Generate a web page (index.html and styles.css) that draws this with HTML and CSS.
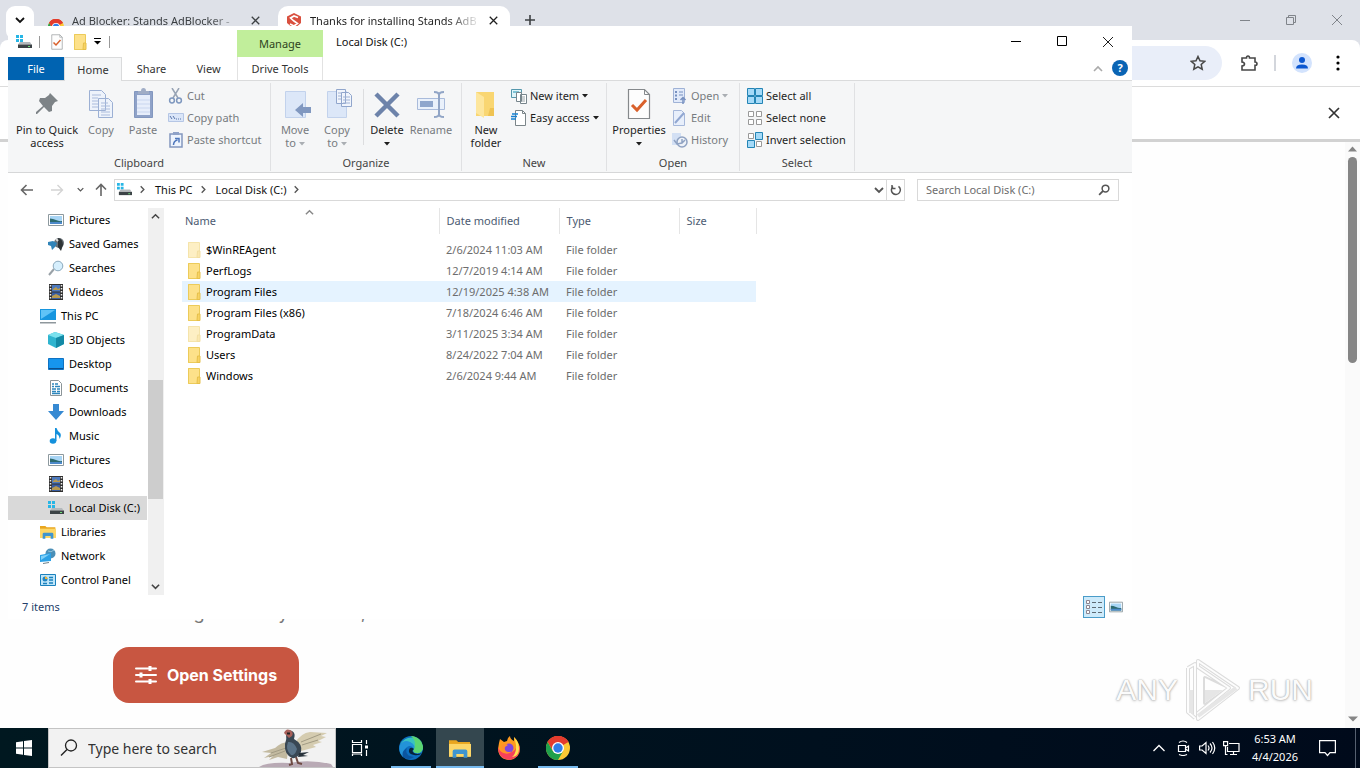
FILE: index.html
```html
<!DOCTYPE html>
<html lang="en">
<head>
<meta charset="utf-8">
<title>Local Disk (C:)</title>
<link rel="stylesheet" href="styles.css">
</head>
<body>
<svg class="defs" aria-hidden="true">
  <symbol id="close" viewBox="0 0 12 12"><path d="M1 1l10 10M11 1L1 11" fill="none" stroke="currentColor"/></symbol>
  <symbol id="caret" viewBox="0 0 6 4"><path d="M0 0h6L3 3.500z" fill="currentColor"/></symbol>
  <symbol id="chev-down" viewBox="0 0 10 10"><path d="M1 3l4 4 4-4" fill="none" stroke="currentColor" stroke-width="1.800"/></symbol>
  <symbol id="chev-up" viewBox="0 0 10 10"><path d="M1 7l4-4 4 4" fill="none" stroke="currentColor" stroke-width="1.600"/></symbol>
  <symbol id="chev-right" viewBox="0 0 10 10"><path d="M3 1.500L6.500 5 3 8.500" fill="none" stroke="currentColor" stroke-width="1.500"/></symbol>
  <symbol id="drive" viewBox="0 0 16 16"><path d="M0 1h3v3H0zM4 1h3v3H4zM0 5h3v3H0zM4 5h3v3H4z" fill="#27b6e6"/><path d="M4 8h10l1.500 2.500H2z" fill="#b4b9bc"/><path d="M2 10.500h14V14H2z" fill="#3c4346"/><path d="M12 12.500h2" stroke="#6fe07a"/></symbol>
  <symbol id="folder" viewBox="0 0 14 16"><path d="M1 0h9.500v1H13v15H1z" fill="#fbdc75"/><path d="M1.500.5h11v15h-11z" fill="#fde18a" stroke="#eccb5a"/><path d="M10.500 9H13v6.500h-3z" fill="#f8d364" stroke="#e6bf4a"/></symbol>
  <symbol id="checkdoc" viewBox="0 0 26 32"><path d="M2.500 1.500h16l5 5v24h-21z" fill="#fdfdfd" stroke="#85898c" stroke-width="1.200"/><path d="M18.500 1.500v5h5" fill="none" stroke="#85898c"/><path d="M6 17l5 5 9-10" fill="none" stroke="#d9602b" stroke-width="3"/></symbol>
  <symbol id="picture" viewBox="0 0 16 16"><path d="M.5 2.500h15v11H.5z" fill="#fff" stroke="#8d999e"/><path d="M2 4h12v8H2z" fill="#a8d5f5"/><path d="M2 6.500q3 0 6 1.500t6 1v3H2z" fill="#2c6a6f"/><path d="M2 10h12v2H2z" fill="#4c89ca"/></symbol>
  <symbol id="film" viewBox="0 0 16 16"><path d="M1 0h14v16H1z" fill="#303030"/><path d="M4 1h8v6.500H4z" fill="#4c79be"/><path d="M4 8.500h8V15H4z" fill="#385da2"/><path d="M5 5l3-2 2 2 2-1v2H5zM4 12l4-2 4 2v2H4z" fill="#b79a50"/><path d="M2.500 1v15M13.500 1v15" stroke="#eee" stroke-width="1.500" stroke-dasharray="1.500 1.500"/></symbol>
  <symbol id="searchdoc" viewBox="0 0 16 16"><path d="M1 15l5-6" stroke="#9aa2a8" stroke-width="2"/><circle cx="10" cy="6" r="4.800" fill="#d6effd" stroke="#8ba9bd"/></symbol>
  <symbol id="glass" viewBox="0 0 16 16"><circle cx="10" cy="6" r="4.500" fill="none" stroke="currentColor" stroke-width="2"/><path d="M6.800 9.200L1.500 14.500" stroke="currentColor" stroke-width="2.400"/></symbol>
  <symbol id="libfolder" viewBox="0 0 24 20"><path d="M0 1h8l2 2h13v16H0z" fill="#e9a61f"/><path d="M0 5h24v14H0z" fill="#fdd768"/><path d="M4 20v-7q0-2 2-2h12q2 0 2 2v7h-4v-4H8v4z" fill="#3f95cf"/></symbol>
  <symbol id="chrome" viewBox="0 0 24 24"><circle cx="12" cy="12" r="12" fill="#fcc934"/><path d="M12 12L1.600 6A12 12 0 0 1 22.400 6z" fill="#e33b2e"/><path d="M12 6h10.400A12 12 0 0 0 1.600 6L7 15z" fill="#e33b2e"/><path d="M1.600 6A12 12 0 0 0 12 24l5.200-9-5.200 3-5.200-3z" fill="#1fa04c"/><circle cx="12" cy="12" r="6" fill="#fff"/><circle cx="12" cy="12" r="4.700" fill="#2f7de9"/></symbol>
</svg>

<div class="desktop">
  <main class="workspace">
    <section class="browser" aria-label="Browser">
      <header class="tabstrip">
        <button class="tab-search" aria-label="Search tabs"><svg width="10" height="10"><use href="#chev-down"/></svg></button>
        <div class="tab">
          <svg class="favicon" width="16" height="16"><use href="#chrome"/></svg>
          <span class="tab-title">Ad Blocker: Stands AdBlocker -</span>
          <button aria-label="Close tab"><svg class="bold" width="9" height="9"><use href="#close"/></svg></button>
        </div>
        <div class="tab active">
          <svg width="16" height="16" viewBox="0 0 16 16"><path d="M8 0l7 3.500V10l-7 6-7-6V3.500z" fill="#d9503f"/><path d="M12 4.500L8 3 4.500 5 8 8l3.500 2.500L8 13l-4-2" fill="none" stroke="#fff" stroke-width="1.600"/></svg>
          <span class="tab-title">Thanks for installing Stands AdB</span>
          <button aria-label="Close tab"><svg class="bold" width="9" height="9"><use href="#close"/></svg></button>
        </div>
        <button class="new-tab" aria-label="New tab"><svg width="12" height="12" viewBox="0 0 12 12"><path d="M6 1v10M1 6h10" stroke="currentColor" stroke-width="1.600"/></svg></button>
        <div class="win-controls muted">
          <button aria-label="Minimize browser"><svg width="12" height="12" viewBox="0 0 12 12"><path d="M1 6.500h10" stroke="currentColor"/></svg></button>
          <button aria-label="Restore browser"><svg width="12" height="12" viewBox="0 0 12 12"><path d="M1.500 3.500h7v7h-7zM3.500 3.500v-2h7v7h-2" fill="none" stroke="currentColor"/></svg></button>
          <button aria-label="Close browser"><svg width="12" height="12"><use href="#close"/></svg></button>
        </div>
      </header>
      <div class="toolbar">
        <div class="omnibox"><svg width="16" height="16" viewBox="0 0 16 16"><path d="M8 1.500l2 4.300 4.700.5-3.500 3.200 1 4.700L8 11.800l-4.200 2.400 1-4.700L1.300 6.300 6 5.800z" fill="none" stroke="#474747" stroke-width="1.500"/></svg></div>
        <button class="ext" aria-label="Extensions"><svg width="18" height="18" viewBox="0 0 18 18"><path d="M2 4h4.500q0-2 1.500-2t1.500 2H15v4q2 0 2 1.700t-2 1.700V16H2v-4q2.500-.3 2.500-2T2 8z" fill="none" stroke="#474747" stroke-width="1.600"/></svg></button>
        <span class="tool-sep"></span>
        <button class="avatar" aria-label="Profile"><svg width="20" height="20" viewBox="0 0 20 20"><circle cx="10" cy="10" r="10" fill="#d3e3fd"/><circle cx="10" cy="7" r="3" fill="#0b57d0"/><path d="M4 15.500q0-4 6-4t6 4z" fill="#0b57d0"/></svg></button>
        <button class="dots" aria-label="Menu"><svg width="4" height="16" viewBox="0 0 4 16"><circle cx="2" cy="2" r="1.600"/><circle cx="2" cy="8" r="1.600"/><circle cx="2" cy="14" r="1.600"/></svg></button>
      </div>
      <div class="infobar"><button aria-label="Dismiss"><svg class="bold" width="12" height="12"><use href="#close"/></svg></button></div>
      <div class="page">
        <div class="page-body">
          <p>Configure how you block,</p>
          <button class="open-settings">
            <svg width="22" height="20" viewBox="0 0 22 20"><path d="M1 3.500h20M1 10h20M1 16.500h20" stroke="#fff" stroke-width="2" stroke-linecap="round"/><path d="M15 1v5M6 7.500v5M15 14v5" stroke="#fff" stroke-width="3"/></svg>
            Open Settings
          </button>
        </div>
        <div class="page-scroll">
          <svg width="9" height="6" viewBox="0 0 9 6"><path d="M0 5.500L4.500.5 9 5.500z" fill="#858585"/></svg>
          <span></span>
          <svg width="10" height="6" viewBox="0 0 10 6"><path d="M0 .5h10l-5 5z" fill="#858585"/></svg>
        </div>
      </div>
      <div class="watermark">
        <span>ANY</span>
        <svg width="56" height="64" viewBox="0 0 56 64"><g fill="none" stroke-linejoin="round"><path d="M3 10v44l7 6M3 10l7-4v50M13 3l40 27-40 31v-6l31-25L13 9zM20 20v25l21-15z" stroke="#dcdcdc" stroke-width="4"/><path d="M3 10v44l7 6M3 10l7-4v50M13 3l40 27-40 31v-6l31-25L13 9z" stroke="#fdfdfd" stroke-width="2"/><path d="M20 20v25l21-15z" fill="#fefefe" stroke="none"/><path d="M20 32v13l18-13z" fill="#e6e6e6"/><path d="M13 58l38-28M6 32v23" stroke="#e6e6e6" stroke-width="4"/></g></svg>
        <span>RUN</span>
      </div>
    </section>

    <section class="explorer" aria-label="File Explorer">
      <header class="titlebar">
        <div class="quick">
          <svg width="16" height="16"><use href="#drive"/></svg><i></i>
          <button aria-label="Properties"><svg width="14" height="16"><use href="#checkdoc"/></svg></button>
          <button aria-label="New folder"><svg width="14" height="16"><use href="#folder"/></svg></button>
          <button class="qmenu" aria-label="Customize toolbar"><svg width="7" height="7" viewBox="0 0 7 7"><path d="M0 .5h7" stroke="#000"/><path d="M0 3h7L3.500 6.500z"/></svg></button><i></i>
        </div>
        <div class="manage">Manage</div>
        <h1>Local Disk (C:)</h1>
        <div class="win-controls">
          <button aria-label="Minimize"><svg width="12" height="12" viewBox="0 0 12 12"><path d="M1 5.500h10" stroke="#000"/></svg></button>
          <button aria-label="Maximize"><svg width="12" height="12" viewBox="0 0 12 12"><path d="M1.500.5h9v9h-9z" fill="none" stroke="#000"/></svg></button>
          <button aria-label="Close"><svg width="12" height="12"><use href="#close"/></svg></button>
        </div>
      </header>
      <nav class="tabs" aria-label="Ribbon tabs">
        <button class="file">File</button><button class="home">Home</button><button class="share">Share</button><button class="view">View</button><button class="drive-tools">Drive Tools</button>
        <button class="collapse" aria-label="Collapse ribbon"><svg width="10" height="10"><use href="#chev-up"/></svg></button>
        <button class="help" aria-label="Help">?</button>
      </nav>

      <div class="ribbon">
        <div class="group clipboard">
          <div class="tools">
            <button class="big wide"><svg width="32" height="32" viewBox="0 0 32 32"><path d="M19 5l8 8-3 1-3 4 0 5-3 1-5-5-7 7-1 0 0-2 7-6-4-5 1-3 5 0 4-3z" fill="#7d8387"/></svg>Pin to Quick access</button>
            <button class="big off"><svg width="32" height="32" viewBox="0 0 32 32"><path d="M4.500 2.500h12l4 4v16h-16zM13.500 10.500h10l4 4v15h-14z" fill="#eef3fb" stroke="#9cb0d4"/><path d="M7 7h9M7 10h6M7 13h6M7 16h6M7 19h6M16 15h7M16 18h9M16 21h9M16 24h9M16 27h9" stroke="#aabbdc"/></svg>Copy</button>
            <button class="big off"><svg width="32" height="32" viewBox="0 0 32 32"><path d="M7.500 3.500h18v26h-18z" fill="#8fa2c8" stroke="#8297bf"/><path d="M10 7h13v20H10z" fill="#e7eefb"/><path d="M11 6V3h3q0-3 2.500-3T19 3h3v3z" fill="#a0adc6"/><path d="M10 12h13M10 16h13M10 20h13M10 24h13" stroke="#c9d6ef"/></svg>Paste</button>
            <div class="small">
              <button class="off"><svg width="16" height="16" viewBox="0 0 16 16"><path d="M4 0l6 10M11 0L5 10" stroke="#98a4b5" stroke-width="1.500"/><circle cx="4" cy="12.500" r="2.400" fill="none" stroke="#7f98bf" stroke-width="1.500"/><circle cx="11" cy="12.500" r="2.400" fill="none" stroke="#7f98bf" stroke-width="1.500"/></svg>Cut</button>
              <button class="off"><svg width="16" height="16" viewBox="0 0 16 16"><path d="M.5 3.500h15v8H.5z" fill="#dbe6f8" stroke="#b5c6e5"/><path d="M2 6l2 3M5 6l2 3M8 9h1M10 9h1M12 9h1" stroke="#5875aa"/></svg>Copy path</button>
              <button class="off"><svg width="16" height="16" viewBox="0 0 16 16"><path d="M2 2h12v13H2z" fill="#eef4fd" stroke="#8297bf" stroke-width="1.500"/><path d="M5 0h6v3H5z" fill="#8fa2c8"/><path d="M5.500 13q0-4 4-5M7 6.500h4v4" fill="none" stroke="#4f78bd" stroke-width="1.500"/></svg>Paste shortcut</button>
            </div>
          </div>
          <h2>Clipboard</h2>
        </div>
        <div class="group organize">
          <div class="tools">
            <button class="big off"><svg width="32" height="32" viewBox="0 0 32 32"><path d="M6.500 3.500h20v26h-20z" fill="#dce7f8" stroke="#c2d2ec"/><path d="M16 22l8-7v4h8v6h-8v4z" fill="#8198c0"/></svg><span>Move<br>to <svg width="6" height="4"><use href="#caret"/></svg></span></button>
            <button class="big off"><svg width="32" height="32" viewBox="0 0 32 32"><path d="M6.500 3.500h19v26h-19z" fill="#dce7f8" stroke="#c2d2ec"/><path d="M15.500 1.500h9v14h-9zM20.500 4.500h7l3 3v11h-10z" fill="#f1f5fc" stroke="#91a6cc"/><path d="M17 5h3M17 8h3M17 11h3M22 9h7M22 12h7M22 15h7" stroke="#a1b3d5"/></svg><span>Copy<br>to <svg width="6" height="4"><use href="#caret"/></svg></span></button>
            <i class="tool-line"></i>
            <button class="big"><svg width="32" height="32" viewBox="0 0 32 32"><path d="M5 6l22 22M27 6L5 28" stroke="#6d83aa" stroke-width="4.500"/></svg><span>Delete<br><svg width="6" height="4"><use href="#caret"/></svg></span></button>
            <button class="big rename off"><svg width="32" height="32" viewBox="0 0 32 32"><path d="M2.500 10.500h27v11h-27z" fill="#eaf1fb" stroke="#a9bbdb"/><path d="M5 13h13v6H5z" fill="#8fa6cc"/><path d="M19 4q5 0 5 3v19q0 3-5 3M29 4q-5 0-5 3v19q0 3 5 3" fill="none" stroke="#91a5c6" stroke-width="2"/></svg>Rename</button>
          </div>
          <h2>Organize</h2>
        </div>
        <div class="group new">
          <div class="tools">
            <button class="big"><svg width="32" height="32" viewBox="0 0 32 32"><path d="M6 4h18v24H6z" fill="#f9d672"/><path d="M6 4l8 5v21l-8-5z" fill="#fde69d"/><path d="M20 20h4v8h-6z" fill="#efc353"/></svg>New folder</button>
            <div class="small">
              <button><svg width="16" height="16" viewBox="0 0 16 16"><path d="M.5 1.500h10v8H.5z" fill="#e0f5fa" stroke="#5597ac"/><path d="M2 4h6" stroke="#1c93b2"/><path d="M5.500 4.500h5v9h-5zM9.500 6.500h6v9h-6z" fill="#fff" stroke="#77858c"/><path d="M11 9h3M11 11h3M11 13h3" stroke="#9aa5aa"/></svg>New item <svg width="6" height="4"><use href="#caret"/></svg></button>
              <button><svg width="16" height="16" viewBox="0 0 16 16"><path d="M4.500.5h7l3 3v12h-10z" fill="#fff" stroke="#7b8589"/><path d="M11.500.5v3h3" fill="none" stroke="#7b8589"/><path d="M1 4h6M0 6.500h6M0 9h5" stroke="#1681d2" stroke-width="1.500"/></svg>Easy access <svg width="6" height="4"><use href="#caret"/></svg></button>
            </div>
          </div>
          <h2>New</h2>
        </div>
        <div class="group open">
          <div class="tools">
            <button class="big props"><svg width="26" height="32"><use href="#checkdoc"/></svg><span>Properties<br><svg width="6" height="4"><use href="#caret"/></svg></span></button>
            <div class="small">
              <button class="off"><svg width="16" height="16" viewBox="0 0 16 16"><path d="M1.500.5h11v14h-11z" fill="#e1eafa" stroke="#9fb2d6"/><path d="M4 3v9" stroke="#7790bf" stroke-width="2" stroke-dasharray="2 1.500"/><path d="M7 4h4M7 7h4" stroke="#7790bf"/><path d="M11 16v-6M8.500 12L11 9.500l2.500 2.500" fill="none" stroke="#7790bf" stroke-width="1.500"/></svg>Open <svg width="6" height="4"><use href="#caret"/></svg></button>
              <button class="off"><svg width="16" height="16" viewBox="0 0 16 16"><path d="M1.500.5h8l3 3v12h-11z" fill="#e8effb" stroke="#a6b8da"/><path d="M3 13l9-10" stroke="#91a7d1" stroke-width="2"/></svg>Edit</button>
              <button class="off"><svg width="16" height="16" viewBox="0 0 16 16"><path d="M0 1h9v12H0z" fill="#d3e0f4"/><circle cx="10" cy="10" r="5" fill="#eef2f8" stroke="#8fa2c2" stroke-width="1.500"/><path d="M2 8l3 4 5-1 3-3M10 7v4" fill="none" stroke="#8fa2c2" stroke-width="1.500"/></svg>History</button>
            </div>
          </div>
          <h2>Open</h2>
        </div>
        <div class="group select">
          <div class="tools">
            <div class="small">
              <button><svg width="16" height="16" viewBox="0 0 16 16"><path d="M.5.500h7v7h-7zM8.500.500h7v7h-7zM.5 8.500h7v7h-7zM8.500 8.500h7v7h-7z" fill="#a5daf8" stroke="#2384b5"/></svg>Select all</button>
              <button><svg width="16" height="16" viewBox="0 0 16 16"><path d="M1.500 1.500h5v5h-5zM9.500 1.500h5v5h-5zM1.500 9.500h5v5h-5zM9.500 9.500h5v5h-5z" fill="#fff" stroke="#999"/></svg>Select none</button>
              <button><svg width="16" height="16" viewBox="0 0 16 16"><path d="M1.500 1.500h5v5h-5zM9.500 9.500h5v5h-5z" fill="#fff" stroke="#999"/><path d="M8.500.500h7v7h-7zM.5 8.500h7v7h-7z" fill="#a5daf8" stroke="#2384b5"/></svg>Invert selection</button>
            </div>
          </div>
          <h2>Select</h2>
        </div>
      </div>

      <div class="navbar">
        <button aria-label="Back"><svg width="14" height="14" viewBox="0 0 14 14"><path d="M13 7H2M6.500 2L1.500 7l5 5" fill="none" stroke="#666" stroke-width="1.600"/></svg></button>
        <button class="forward" aria-label="Forward"><svg width="14" height="14" viewBox="0 0 14 14"><path d="M1 7h11M7.500 2l5 5-5 5" fill="none" stroke="#d4d4d4" stroke-width="1.400"/></svg></button>
        <button class="recent" aria-label="Recent"><svg width="7" height="7"><use href="#chev-down"/></svg></button>
        <button class="up" aria-label="Up"><svg width="14" height="14" viewBox="0 0 14 14"><path d="M7 13V2M2 6.500l5-5 5 5" fill="none" stroke="#666" stroke-width="1.600"/></svg></button>
        <div class="address">
          <svg width="15" height="15"><use href="#drive"/></svg>
          <svg class="crumb" width="9" height="9"><use href="#chev-right"/></svg><a href="#pc">This PC</a>
          <svg class="crumb" width="9" height="9"><use href="#chev-right"/></svg><a href="#c">Local Disk (C:)</a>
          <svg class="crumb" width="9" height="9"><use href="#chev-right"/></svg>
          <button class="drop" aria-label="Previous locations"><svg width="10" height="10"><use href="#chev-down"/></svg></button>
          <button class="refresh" aria-label="Refresh"><svg width="12" height="12" viewBox="0 0 12 12"><path d="M3 2.500A4.500 4.500 0 1 0 8.500 2.300M2 1v3.500h3.500" fill="none" stroke="#555" stroke-width="1.500"/></svg></button>
        </div>
        <label class="search"><input type="text" placeholder="Search Local Disk (C:)" aria-label="Search Local Disk (C:)"><svg width="12" height="12"><use href="#glass"/></svg></label>
      </div>

      <div class="content">
        <nav class="tree" aria-label="Folders">
          <a href="#1"><svg><use href="#picture"/></svg>Pictures</a>
          <a href="#2"><svg viewBox="0 0 16 16"><circle cx="11" cy="7" r="5" fill="#6a7278"/><path d="M10 2q5 1 5 7l-2 6-3-4z" fill="#2e3437"/><path d="M0 6l5-1 4 2-2 4-3 3-1-4-3-1z" fill="#3184b8"/><path d="M8 3l2 2" stroke="#ddd" stroke-width="2"/></svg>Saved Games</a>
          <a href="#3"><svg><use href="#searchdoc"/></svg>Searches</a>
          <a href="#4"><svg><use href="#film"/></svg>Videos</a>
          <a href="#5" class="root"><svg viewBox="0 0 16 16"><path d="M0 1h16v11H0z" fill="#1796df"/><path d="M1 2h14L1 11z" fill="#5fc3f7"/><path d="M0 14h16v1.500H0z" fill="#8e979c"/></svg>This PC</a>
          <a href="#6"><svg viewBox="0 0 16 16"><path d="M0 3l7-3 9 3v9l-8 4-8-4z" fill="#2fb4cf"/><path d="M0 3l8 3 8-3-9-3z" fill="#7be1ee"/><path d="M8 6l8-3v9l-8 4z" fill="#138aa6"/></svg>3D Objects</a>
          <a href="#7"><svg viewBox="0 0 16 16"><path d="M.5 2.500h15v11H.5z" fill="#1695ee" stroke="#0f72c2"/><path d="M1 12.500h14" stroke="#0c4e8c"/></svg>Desktop</a>
          <a href="#8"><svg viewBox="0 0 16 16"><path d="M2.500.5h8l3 3v12h-11z" fill="#fff" stroke="#8b9498"/><path d="M4 4h2M7 4h3M4 6.500h2M7 6.500h5M4 9h4M9 9h3M4 11.500h4M9 11.500h3M4 13.500h8" stroke="#2c86bd" stroke-width="1.300"/></svg>Documents</a>
          <a href="#9"><svg viewBox="0 0 16 16"><path d="M5 0h6v7h5l-8 9-8-9h5z" fill="#3689d2"/></svg>Downloads</a>
          <a href="#10"><svg viewBox="0 0 16 16"><ellipse cx="5" cy="13" rx="3.300" ry="2.700" fill="#1390dc"/><path d="M7 13V0h1.500q1 3 3 4.500T12.500 9l-1 2q0-4-3-5v7z" fill="#1390dc"/></svg>Music</a>
          <a href="#11"><svg><use href="#picture"/></svg>Pictures</a>
          <a href="#12"><svg><use href="#film"/></svg>Videos</a>
          <a href="#13" class="selected"><svg><use href="#drive"/></svg>Local Disk (C:)</a>
          <a href="#14" class="root"><svg><use href="#libfolder"/></svg>Libraries</a>
          <a href="#15" class="root"><svg viewBox="0 0 16 16"><circle cx="10.500" cy="5.500" r="5" fill="#4b8fb7"/><path d="M8 3q3 2 6-1" stroke="#8fc3dc" fill="none"/><path d="M0 7l11-2v8L0 14z" fill="#2ba1e6"/><path d="M1 8l9-2-9 6z" fill="#7fd0f8"/><path d="M3 15.500l6-1" stroke="#6e7f88"/></svg>Network</a>
          <a href="#16" class="root"><svg viewBox="0 0 16 16"><path d="M.5 2.500h15v11H.5z" fill="#bfe6fa" stroke="#1b81bd"/><circle cx="5" cy="7" r="2.500" fill="#2284c2"/><path d="M5 7V4.500A2.500 2.500 0 0 1 7.500 7z" fill="#f2b632"/><path d="M9 5.500h4M9 8h4M3 11.500h4M9 11h4" stroke="#1b81bd" stroke-width="1.500"/></svg>Control Panel</a>
        </nav>
        <div class="tree-scroll"><svg width="9" height="9"><use href="#chev-up"/></svg><span></span><svg width="9" height="9"><use href="#chev-down"/></svg></div>
        <div class="files">
          <table>
            <colgroup><col class="c-name"><col class="c-mid"><col class="c-mid"><col class="c-size"></colgroup>
            <thead><tr><th>Name<svg class="sort" width="9" height="9"><use href="#chev-up"/></svg></th><th>Date modified</th><th>Type</th><th>Size</th></tr></thead>
            <tbody>
              <tr><td class="hid"><svg><use href="#folder"/></svg>$WinREAgent</td><td>2/6/2024 11:03 AM</td><td>File folder</td><td></td></tr>
              <tr><td><svg><use href="#folder"/></svg>PerfLogs</td><td>12/7/2019 4:14 AM</td><td>File folder</td><td></td></tr>
              <tr class="hover"><td><svg><use href="#folder"/></svg>Program Files</td><td>12/19/2025 4:38 AM</td><td>File folder</td><td></td></tr>
              <tr><td><svg><use href="#folder"/></svg>Program Files (x86)</td><td>7/18/2024 6:46 AM</td><td>File folder</td><td></td></tr>
              <tr><td class="hid"><svg><use href="#folder"/></svg>ProgramData</td><td>3/11/2025 3:34 AM</td><td>File folder</td><td></td></tr>
              <tr><td><svg><use href="#folder"/></svg>Users</td><td>8/24/2022 7:04 AM</td><td>File folder</td><td></td></tr>
              <tr><td><svg><use href="#folder"/></svg>Windows</td><td>2/6/2024 9:44 AM</td><td>File folder</td><td></td></tr>
            </tbody>
          </table>
        </div>
      </div>
      <footer class="status">
        <span>7 items</span>
        <button class="on" aria-label="Details view"><svg width="16" height="16" viewBox="0 0 16 16"><path d="M.5 1.500h3v3h-3zM.5 6.500h3v3h-3zM.5 11.500h3v3h-3z" fill="#fff" stroke="#8d8590"/><path d="M6 3.500h4M12 3.500h4M6 8.500h4M12 8.500h4M6 13.500h4M12 13.500h4" stroke="#5d6a73"/></svg></button>
        <button aria-label="Thumbnail view"><svg width="14" height="14"><use href="#picture"/></svg></button>
      </footer>
    </section>
  </main>

  <footer class="taskbar">
    <button class="start" aria-label="Start"><svg width="16" height="16" viewBox="0 0 16 16"><path d="M0 2.200L7 1.200v6.300H0zM8 1l8-1v7.500H8zM0 8.500h7v6.300l-7-1zM8 8.500h8V16l-8-1z" fill="#fff"/></svg></button>
    <label class="task-search">
      <svg width="18" height="18" viewBox="0 0 18 18"><circle cx="11" cy="6.500" r="5.500" fill="none" stroke="#222" stroke-width="1.300"/><path d="M7 10.500L1 16.500" stroke="#222" stroke-width="1.500"/></svg>
      <input type="text" placeholder="Type here to search" aria-label="Type here to search">
      <svg class="bird" width="76" height="38" viewBox="0 0 76 38"><path d="M0 38q8-5 30-4 20-4 42 1l2 3z" fill="#b9aab5"/><path d="M30 13q-8 0-14 6L3 23l9 1-7 5 9-2-4 4 9-3 9 2z" fill="#c3baa0"/><path d="M36 14q6-10 15-11l17 1-6 3 5 1-8 4 4 1-9 3 3 2-15 4z" fill="#d5ccb0"/><path d="M12 24l15-5M10 28l16-6M42 13l20-8M43 16l16-5" stroke="#a29b84"/><path d="M27 4q2-4 6-2t2 8q9 5 7 13-4 7-9 6-8-4-7-14 2-5 1-11z" fill="#394754"/><path d="M29 13q6-1 9 7-2 7-6 6-6-5-3-13z" fill="#5a7287"/><path d="M40 24l10-1-6 3 5 1-10 1z" fill="#27323b"/><path d="M25 4q2-5 6-3 4 2 2 6l-3 2-3-3z" fill="#a8605a"/><path d="M28 4.500h3" stroke="#222" stroke-width="2"/><path d="M32 29l1 6-3 1M37 28l2 6 4 1" fill="none" stroke="#6e4a43" stroke-width="2"/></svg>
    </label>
    <button class="taskview" aria-label="Task view"><svg width="18" height="16" viewBox="0 0 18 16"><path d="M1.500 4.500h9v8h-9zM1.500 0v2.500h9V0M1.500 16v-2h9v2M15.500 0v4M15.500 10v6" fill="none" stroke="#fff" stroke-width="1.200"/><path d="M14 5.500h3v3h-3z" fill="#fff"/></svg></button>
    <button class="app run" aria-label="Edge"><svg width="24" height="24" viewBox="0 0 24 24"><circle cx="12" cy="12" r="12" fill="#0d6fc0"/><path d="M1 9A12 12 0 0 1 24 12q-1 6-7 5-4-1-2-4 0-7-7-7Q3 6 1 9z" fill="#39c3bf"/><path d="M12 0a12 12 0 0 1 12 12q-1 6-7 5-4-1-2-4 3-8-3-13z" fill="#5bd672"/><path d="M1 9Q5 3 11 6t4 7q-3-5-7-2T4 21Q-1 16 1 9z" fill="#2393d8"/><path d="M15 13q-3 2 0 4t8 0q-3 3-8 2-6-1-5-5 1-4 5-1z" fill="#07233b"/><path d="M8 12q-3 8 7 9-6 4-11 0-2-6 4-9z" fill="#0b55a0"/></svg></button>
    <button class="app run current" aria-label="File Explorer"><svg width="22" height="19"><use href="#libfolder"/></svg></button>
    <button class="app" aria-label="Firefox"><svg width="24" height="24" viewBox="0 0 24 24"><path d="M2 7l1-4 4 3 3-1q0-3 3-5 0 3 4 5V1q5 5 6 11 0 10-10 12Q2 24 1 13z" fill="#ff9a1f"/><path d="M1 11q3 8 11 6 8-2 8-9l3 3q0 11-10 13Q1 23 1 11z" fill="#f7415b"/><path d="M17 1q5 5 5 12t-7 8q7-6 2-20z" fill="#ffe14d"/><circle cx="12" cy="12" r="4.500" fill="#8046df"/><path d="M5 9q3-2 6 0l-3 2q-2 4 3 5 4 0 4-2-2 5-7 3-5-2-3-8z" fill="#ff8f2e"/></svg></button>
    <button class="app run" aria-label="Chrome"><svg width="24" height="24"><use href="#chrome"/></svg></button>
    <div class="tray">
      <button aria-label="Hidden icons"><svg width="12" height="12" viewBox="0 0 12 12"><path d="M.5 9L6 3.500 11.500 9" fill="none" stroke="#fff" stroke-width="1.300"/></svg></button>
      <button aria-label="Meet Now"><svg width="14" height="16" viewBox="0 0 14 16"><path d="M2.500 5.500h7v6h-7zM9.500 8l3-2v5l-3-2M3 2.500q4-3 8 0M3 14.500q4 2 8 0" fill="none" stroke="#fff" stroke-width="1.200"/></svg></button>
      <button aria-label="Volume"><svg width="17" height="14" viewBox="0 0 17 14"><path d="M.6 5h2.500L7 1.500v11L3.100 9H.6zM9 4.500q2 2.500 0 5M11 2.500q4 4.500 0 9M13.500 1q4.500 6 0 12" fill="none" stroke="#fff" stroke-width="1.200"/></svg></button>
      <button aria-label="Network"><svg width="17" height="15" viewBox="0 0 17 15"><path d="M6 2.500h10v8H4.500V6M10.500 10.500v3M7 13.500h7M.6.600h4v4h-4zM2.500 5v8.500h2" fill="none" stroke="#fff" stroke-width="1.200"/></svg></button>
      <time>6:53 AM<br>4/4/2026</time>
      <button class="notify" aria-label="Notifications"><svg width="17" height="17" viewBox="0 0 17 17"><path d="M.6.600h15.800v12H11L8.500 15.500 6 12.600H.6z" fill="none" stroke="#fff" stroke-width="1.200"/></svg></button>
      <i></i>
    </div>
  </footer>
</div>
</body>
</html>
```

FILE: styles.css
```css
* { box-sizing: border-box; }
body { margin: 0; font: 11px/14px "Noto Sans", "Open Sans", sans-serif; color: #1e1e1e; }
button { border: 0; padding: 0; background: none; font: inherit; color: inherit; display: flex; align-items: center; justify-content: center; }
a { color: inherit; text-decoration: none; }
svg { flex: none; display: block; }
h1, h2, p { margin: 0; font-weight: 400; font-size: inherit; }
input { border: 0; outline: 0; background: none; padding: 0; min-width: 0; flex: 1; font: inherit; color: inherit; }
.defs { position: absolute; width: 0; height: 0; }
.bold { stroke-width: 1.7; }
.desktop { display: flex; flex-direction: column; height: 100vh; overflow: hidden; }
.workspace { position: relative; flex: 1; min-height: 0; }

/* Browser */
.browser { display: flex; flex-direction: column; height: 100%; background: #dee1e8; }
.tabstrip { display: flex; height: 40px; padding-left: 6px; color: #3c4043; }
.tab-search { width: 28px; height: 34px; margin-top: 6px; padding-bottom: 6px; background: #fff; border-radius: 9px; color: #111; }
.tab { display: flex; align-items: center; width: 232px; height: 34px; margin: 6px 0 0 6px; padding: 0 12px 5px 8px; gap: 8px; }
.tab.active { background: #fff; border-radius: 10px 10px 0 0; color: #1f1f1f; }
.favicon { align-self: flex-end; }
.tab-title { flex: 1; white-space: nowrap; mask-image: linear-gradient(90deg, #000 80%, transparent); }
.tab button { width: 9px; }
.new-tab { width: 24px; margin-left: 8px; }
.win-controls { display: flex; margin-left: auto; }
.win-controls button { width: 46px; }
.muted { color: #80848a; }
.toolbar { display: flex; align-items: center; height: 47px; background: #fff; border-radius: 8px 8px 0 0; border-bottom: 1px solid #dcdcdc; padding: 0 20px 0 100px; }
.omnibox { display: flex; align-items: center; justify-content: flex-end; flex: 1; height: 34px; padding-right: 16px; border-radius: 17px; background: #e9eef9; }
.ext { width: 18px; margin-left: 18px; }
.tool-sep { width: 2px; height: 16px; margin: 0 16px; background: #d3d6dc; }
.avatar { width: 20px; }
.dots { width: 4px; margin-left: 24px; color: #333; }
.infobar { display: flex; justify-content: flex-end; height: 55px; padding: 0 20px 0; background: #fff; border-bottom: 3px solid #d2d2d2; color: #333; }
.page { display: flex; flex: 1; min-height: 0; background: #fefefe; }
.page-body { display: flex; flex-direction: column; align-items: flex-start; justify-content: flex-end; flex: 1; padding: 0 0 25px 113px; }
.page-body p { margin: 0 0 22px 35px; font: 18px/24px Inter, sans-serif; color: #777; }
.open-settings { gap: 10px; width: 186px; height: 56px; border-radius: 16px; background: #c85641; color: #fff; font: 700 16px/20px Inter, sans-serif; }
.page-scroll { display: flex; flex-direction: column; align-items: center; width: 15px; padding: 4px 0 6px; background: #fafafa; }
.page-scroll span { width: 9px; height: 206px; margin: 5px 0 auto; border-radius: 5px; background: #858585; }
.watermark { position: absolute; right: 47px; bottom: 6px; display: flex; align-items: center; gap: 7px; font: 30px/64px "Liberation Sans", sans-serif; color: #fbfbfb; text-shadow: 0 0 1px #aaa, 0 0 2px #bbb, 0 1px 3px #ccc; }

/* Explorer window */
.explorer { position: absolute; inset: 26px 228px 109px 8px; display: flex; flex-direction: column; background: #fff; overflow: hidden; }
.titlebar { display: flex; height: 31px; }
.quick { display: flex; align-items: center; width: 229px; padding-left: 8px; }
.quick i { width: 1px; height: 12px; margin: 0 10px 0 7px; background: #999; }
.quick button + button { margin-left: 9px; }
.quick button + .qmenu { width: 7px; margin-left: 7px; }
.quick .qmenu + i { margin: 0 0 0 8px; }
.manage { width: 86px; margin-top: 4px; background: #c1ee9b; line-height: 27px; text-align: center; color: #2e4420; }
.titlebar h1 { margin-left: 13px; line-height: 32px; font-size: 11px; color: #111; }
.titlebar .win-controls { padding-right: 1px; }
.tabs { display: flex; height: 24px; border-bottom: 1px solid #dadbdc; color: #333; }
.tabs .file { width: 56px; background: #0063b1; color: #fff; }
.tabs .home { width: 58px; height: 24px; background: #f5f6f7; border: 1px solid #dadbdc; border-bottom: 0; }
.tabs .share { width: 59px; }
.tabs .view { width: 55px; }
.tabs .drive-tools { width: 86px; margin-left: 1px; border: 1px solid #e2e2e2; border-width: 0 1px; }
.tabs .collapse { width: 16px; margin-left: auto; color: #aaa; }
.tabs .help { width: 16px; height: 16px; margin: 3px 4px 0 6px; border-radius: 50%; background: #0a64b4; color: #fff; font-weight: 700; }
.ribbon { display: flex; height: 92px; background: #f5f6f7; border-bottom: 1px solid #d6d7d8; }
.group { display: flex; flex-direction: column; justify-content: space-between; flex: none; margin: 2px 0 1px; padding-top: 2px; border-right: 1px solid #e0e1e3; }
.group h2 { text-align: center; color: #444; line-height: 17px; }
.tools { display: flex; align-items: flex-start; padding-left: 3px; }
.clipboard { width: 263px; }
.clipboard .tools { padding-left: 6px; }
.organize { width: 191px; }
.new { width: 145px; }
.open { width: 133px; }
.select { width: 115px; }
.select .tools { padding-left: 7px; }
.big { flex-direction: column; width: 42px; gap: 3px; justify-content: flex-start; line-height: 13px; padding-top: 3px; }
.big span svg { display: inline-block; vertical-align: middle; }
.wide { width: 66px; }
.rename { width: 46px; }
.props { width: 58px; }
.off { color: #777b80; }
.off use[href="#caret"] { color: #aaaeb3; }
.tool-line { width: 1px; height: 56px; margin: 4px 2px 0 5px; background: #dcdddf; }
.small { display: flex; flex-direction: column; margin-left: 4px; }
.small button { height: 22px; gap: 3px; justify-content: flex-start; white-space: nowrap; }
.select .small { margin-left: 0; }
.navbar { display: flex; align-items: center; height: 35px; padding: 0 13px 2px 12px; color: #555; }
.navbar > button { width: 14px; margin-right: 16px; }
.navbar > .forward { margin-right: 13px; }
.navbar > .recent { width: 7px; margin-right: 10px; }
.navbar > .up { margin-right: 6px; }
.address { display: flex; align-items: center; flex: 1; height: 22px; border: 1px solid #d9d9d9; padding-left: 2px; color: #111; }
.crumb { margin: 0 8px 0 6px; color: #555; }
.address .drop { margin-left: auto; width: 14px; color: #555; }
.address .refresh { width: 18px; height: 20px; border-left: 1px solid #d9d9d9; }
.search { display: flex; align-items: center; width: 202px; height: 22px; margin-left: 12px; padding: 0 8px; border: 1px solid #d9d9d9; }
.search input::placeholder { color: #6d6d6d; opacity: 1; }
.content { display: flex; flex: 1; min-height: 0; }
.tree { width: 140px; overflow: hidden; color: #000; }
.tree a { display: flex; align-items: center; height: 24px; width: 139px; padding-left: 40px; gap: 5px; white-space: nowrap; }
.tree .root { padding-left: 32px; }
.tree svg { width: 16px; height: 16px; }
.tree .selected { background: #d9d9d9; }
.tree-scroll { display: flex; flex-direction: column; align-items: center; width: 16px; padding: 4px 1px 4px 0; background: #f0f0f0; color: #444; }
.tree-scroll span { align-self: stretch; margin: 159px 0 auto; height: 119px; background: #cdcdcd; }
.files { flex: 1; padding-left: 18px; }
table { border-collapse: collapse; table-layout: fixed; width: 574px; color: #6d6d6d; }
.c-name { width: 257px; }
.c-mid { width: 120px; }
.c-size { width: 77px; }
th { height: 26px; padding: 0 0 0 7px; font-weight: 400; text-align: left; color: #4c5b72; border-right: 1px solid #e5e5e5; }
th:first-child { padding-left: 3px; position: relative; }
.sort { position: absolute; left: 123px; top: 0; color: #888; }
thead::after { content: ""; display: block; height: 5px; }
td { height: 21px; padding: 0 0 0 7px; white-space: nowrap; }
td:first-child { padding-left: 5px; color: #000; }
td svg { display: inline-block; width: 14px; height: 16px; margin-right: 5px; vertical-align: -4px; }
.hid svg { opacity: .5; }
.hover { background: #e5f3ff; }
.status { display: flex; align-items: center; height: 24px; padding: 0 5px 0 14px; color: #24406b; }
.status span { margin-right: auto; }
.status button { width: 22px; height: 22px; }
.status .on { background: #cdeafa; border: 1px solid #4a9cc9; }

/* Taskbar */
.taskbar { display: flex; flex: none; height: 40px; background: linear-gradient(90deg, #001820, #00101e 60%, #000a1b); color: #fff; }
.start { width: 48px; }
.task-search { display: flex; align-items: center; gap: 10px; width: 288px; padding-left: 11px; background: #f2f2f2; border: 1px solid #c4c4c4; font-size: 14px; }
.task-search input::placeholder { color: #333; opacity: 1; }
.bird { align-self: flex-end; }
.taskview { width: 48px; margin-right: 3px; }
.app { width: 48px; margin-right: 1px; }
.run { background: linear-gradient(#76b9ed, #76b9ed) center bottom / 40px 2px no-repeat; }
.current { background-color: #34474f; background-size: 48px 2px; }
.tray { display: flex; margin-left: auto; }
.tray button { width: 24px; }
.tray time { width: 64px; font-size: 11px; line-height: 18px; padding-top: 2px; text-align: center; }
.tray .notify { width: 40px; }
.tray i { width: 1px; margin: 0 4px 0 8px; background: #566070; }
```
